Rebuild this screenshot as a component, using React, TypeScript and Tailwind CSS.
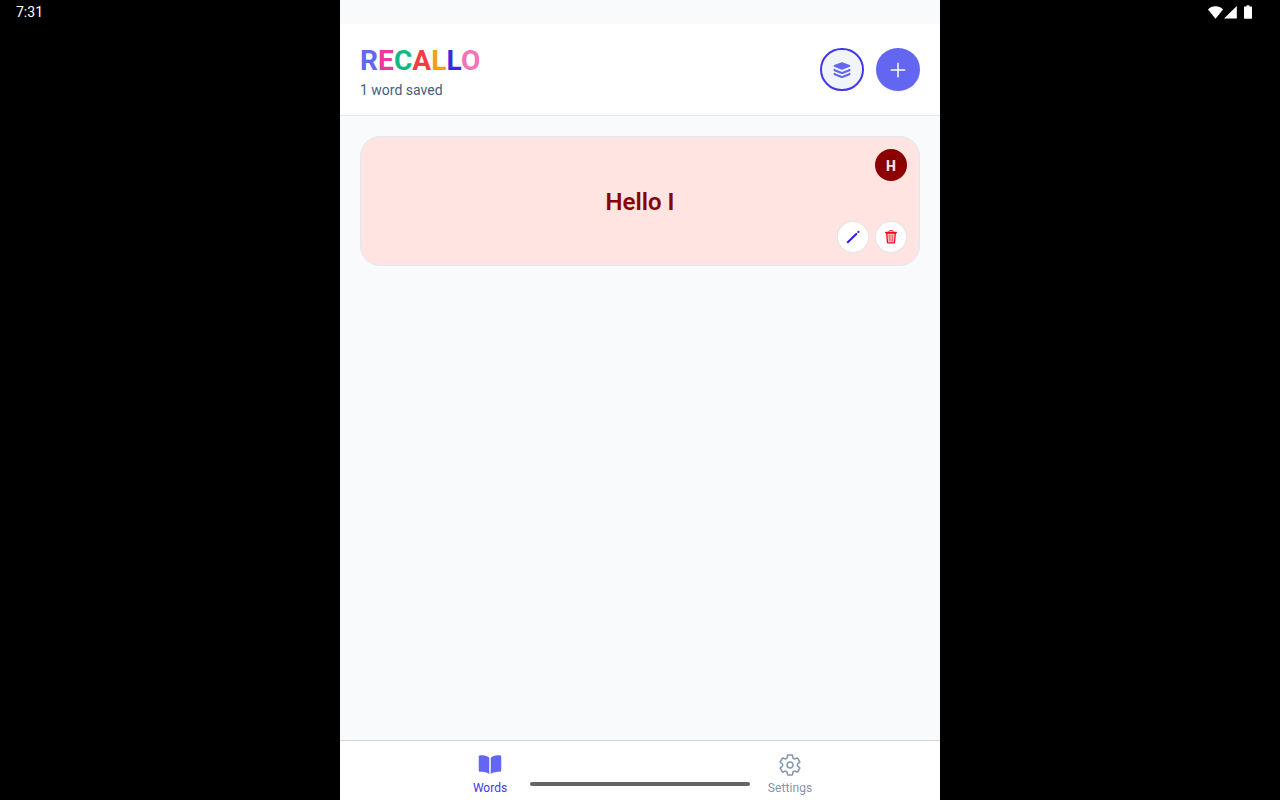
import { IoAdd, IoBook, IoSettingsOutline } from "react-icons/io5";

const logo = [
  { letter: "R", color: "text-[#6366f1]" },
  { letter: "E", color: "text-[#ec3a99]" },
  { letter: "C", color: "text-[#10b981]" },
  { letter: "A", color: "text-[#ef3e44]" },
  { letter: "L", color: "text-[#f59e0b]" },
  { letter: "L", color: "text-[#3a2be0]" },
  { letter: "O", color: "text-[#f472b6]" },
];

const words = [{ id: 1, text: "Hello I", badge: "H" }];

function StatusBar() {
  return (
    <div className="absolute inset-x-0 top-0 flex h-6 items-center justify-between pl-4 pr-[27px] text-white">
      <span className="text-sm leading-6">7:31</span>
      <div className="flex items-center">
        <svg className="h-[13px] w-4" viewBox="0 0 16 13" fill="currentColor">
          <path d="M7.500 12.800 0 3.400C2 1.500 4.500 0.300 7.500 0.300s5.500 1.200 7.500 3.100z" />
        </svg>
        <svg className="h-[13px] w-[14px]" viewBox="0 0 14 13" fill="currentColor">
          <path d="M0 12.500 12.800 0V12.500z" />
        </svg>
        <svg className="ml-[6px] h-[14px] w-[9px]" viewBox="0 0 9 14" fill="currentColor">
          <path d="M2.500 0.300h3V1.500H7c.600 0 1 .400 1 1v10.300c0 .600-.400 1-1 1H1c-.600 0-1-.400-1-1V2.500c0-.600.400-1 1-1h1.500z" />
        </svg>
      </div>
    </div>
  );
}

function LayersIcon() {
  return (
    <svg className="h-[18px] w-[18px]" viewBox="0 0 18 18" fill="currentColor">
      <path d="M9 1.200c.3 0 .6.100.9.200l6.800 2.700c.9.400.9 1.200 0 1.600L9.900 8.500c-.6.200-1.200.2-1.800 0L1.300 5.700c-.9-.4-.9-1.200 0-1.600l6.800-2.700c.3-.1.600-.2.900-.2z" />
      <path
        d="M1.500 8.900c.3.500.8.700 1.400.9l5.200 2c.6.200 1.200.2 1.800 0l5.200-2c.6-.2 1.100-.4 1.400-.9M1.500 12.900c.3.500.8.700 1.400.9l5.200 2c.6.200 1.200.2 1.800 0l5.200-2c.6-.2 1.100-.4 1.400-.9"
        fill="none"
        stroke="currentColor"
        strokeWidth={2.1}
        strokeLinecap="round"
      />
    </svg>
  );
}

function PencilIcon() {
  return (
    <svg className="h-4 w-4" viewBox="0 0 16 16" fill="none" stroke="currentColor" strokeLinecap="round">
      <path d="M2.800 13.200 11.300 4.900" strokeWidth={2.1} />
      <path d="M13.300 3l.2-.2" strokeWidth={2.1} />
    </svg>
  );
}

function TrashIcon() {
  return (
    <svg
      className="h-4 w-4"
      viewBox="0 0 16 16"
      fill="none"
      stroke="currentColor"
      strokeLinecap="round"
      strokeLinejoin="round"
    >
      <path d="M3.700 4l.7 8.900c0 .6.4 1 1 1h5.200c.6 0 1-.4 1-1L12.300 4z" fill="currentColor" fillOpacity={0.2} strokeWidth={1.300} />
      <path d="M2.700 3.500h10.600" strokeWidth={1.500} />
      <path d="M5.900 3V2.200c0-.4.300-.7.700-.7h2.800c.4 0 .7.300.7.700V3" strokeWidth={0.800} />
      <path d="M6.200 6l.2 6M8 6v6M9.800 6l-.2 6" strokeWidth={0.600} />
    </svg>
  );
}

function Header() {
  return (
    <header className="flex h-[92px] items-center justify-between border-b border-slate-200 bg-white px-5">
      <div className="pt-[5px]">
        <h1 className="text-[28px] font-bold leading-8 tracking-[0.1px]">
          {logo.map((item, i) => (
            <span key={i} className={item.color}>
              {item.letter}
            </span>
          ))}
        </h1>
        <p className="mt-[3px] text-sm leading-5 text-[#426080]">
          {words.length} word saved
        </p>
      </div>
      <div className="flex gap-3">
        <button className="flex h-[43.5px] w-11 items-center justify-center rounded-full border-2 border-[#4338e8] bg-slate-100 text-[#6366f1]">
          <LayersIcon />
        </button>
        <button className="flex h-[43.5px] w-11 items-center justify-center rounded-full bg-[#6366f1] text-white shadow-xs">
          <IoAdd size={24} />
        </button>
      </div>
    </header>
  );
}

function WordCard({ text, badge }: { text: string; badge: string }) {
  return (
    <div className="relative flex h-[130px] items-center justify-center rounded-[20px] border border-slate-200 bg-[#ffe4e1]">
      <h2 className="pt-0.5 text-2xl font-semibold text-[#8b0000]">{text}</h2>
      <span className="absolute right-3 top-3 flex h-8 w-8 items-center justify-center rounded-full bg-[#8b0000] pt-px text-sm font-extrabold text-[#ffe4e1]">
        {badge}
      </span>
      <div className="absolute bottom-3 right-3 flex gap-1.5">
        <button className="flex h-8 w-8 items-center justify-center rounded-full border border-black/10 bg-white text-[#2f20ee]">
          <PencilIcon />
        </button>
        <button className="flex h-8 w-8 items-center justify-center rounded-full border border-black/10 bg-white text-[#ee0d14]">
          <TrashIcon />
        </button>
      </div>
    </div>
  );
}

function TabBar() {
  return (
    <nav className="relative flex h-[60px] border-t border-[#d8d8d8] bg-white">
      <button className="flex flex-1 flex-col items-center pt-[11.5px] text-[#4338e8]">
        <IoBook size={24} className="text-[#6366f1]" />
        <span className="mt-[3.5px] text-xs leading-4">Words</span>
      </button>
      <button className="flex flex-1 flex-col items-center pt-[11.5px] text-[#8394ad]">
        <IoSettingsOutline size={24} />
        <span className="mt-[3.5px] text-xs leading-4 tracking-[0.1px]">Settings</span>
      </button>
      {/* Gesture handle */}
      <div className="absolute bottom-[14px] left-1/2 h-1 w-[220px] -translate-x-1/2 rounded-full bg-[#666666]" />
    </nav>
  );
}

export default function App() {
  return (
    <div className="relative h-screen overflow-hidden bg-black font-['Roboto',sans-serif]">
      <StatusBar />
      <div className="mx-auto flex h-full w-[600px] flex-col bg-slate-50 pt-6">
        <Header />
        <main className="flex-1 p-5">
          {words.map((word) => (
            <WordCard key={word.id} text={word.text} badge={word.badge} />
          ))}
        </main>
        <TabBar />
      </div>
    </div>
  );
}
